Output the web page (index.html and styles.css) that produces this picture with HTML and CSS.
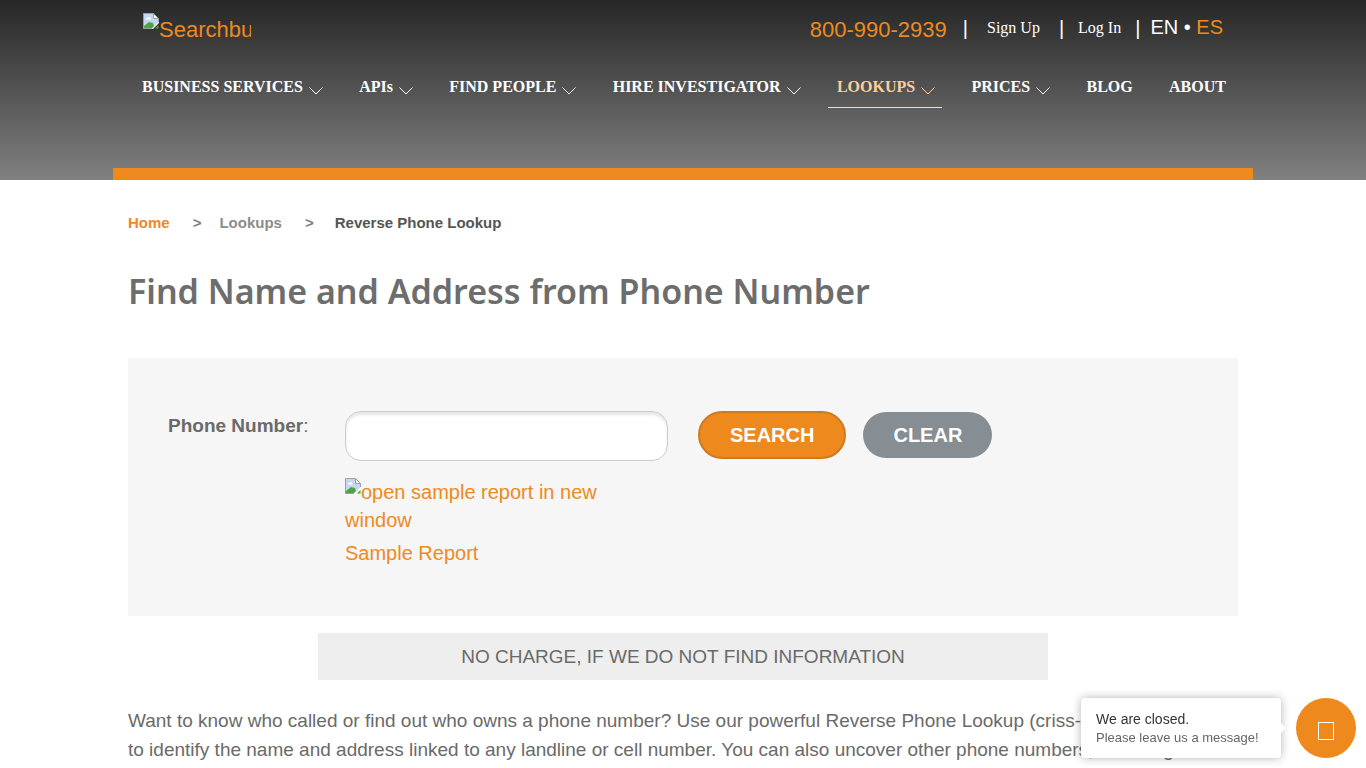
FILE: index.html
```html
<!DOCTYPE html>
<html lang="en">
<head>
<meta charset="utf-8">
<meta name="viewport" content="width=device-width, initial-scale=1">
<title>Reverse Phone Lookup</title>
<link rel="stylesheet" href="styles.css">
</head>
<body>
<svg class="defs" aria-hidden="true">
  <symbol id="chevron" viewBox="0 0 14 8"><path d="M.5.5 7 7 13.5.5" fill="none" stroke="currentColor"/></symbol>
  <symbol id="missing" viewBox="0 0 16 16">
    <path d="M.5.5h10l5 5v4l-6 6H.5z" fill="#c4d8f4" stroke="#9a9fa6"/>
    <path d="M10.500.5v5h5z" fill="#fff" stroke="#9a9fa6"/>
    <path d="M3 6.500a2 2 0 0 1 2-2 2 2 0 0 1 3 2z" fill="#fff"/>
    <path d="M1 15v-2l5-4 4 1 1 3-2 2z" fill="#4fa43f"/>
    <path d="M8.500 16 16 8.500V10l-6 6z" fill="#fff"/>
    <path d="M12 15.500h3.500V12z" fill="#4fa43f"/>
  </symbol>
</svg>
<header class="header">
  <div class="container header-inner">
    <div class="topbar">
      <a class="logo" href="#"><svg class="missing"><use href="#missing"/></svg>Searchbug</a>
      <div class="account">
        <a class="phone" href="#">800-990-2939</a>
        <span class="bar">|</span>
        <a class="sign" href="#">Sign Up</a>
        <span class="bar">|</span>
        <a class="log" href="#">Log In</a>
        <span class="bar">|</span>
        <span class="lang">EN • <a href="#">ES</a></span>
      </div>
    </div>
    <nav class="nav">
      <a href="#">BUSINESS SERVICES<svg class="chevron"><use href="#chevron"/></svg></a>
      <a href="#">APIs<svg class="chevron"><use href="#chevron"/></svg></a>
      <a href="#">FIND PEOPLE<svg class="chevron"><use href="#chevron"/></svg></a>
      <a href="#">HIRE INVESTIGATOR<svg class="chevron"><use href="#chevron"/></svg></a>
      <a class="active" href="#">LOOKUPS<svg class="chevron"><use href="#chevron"/></svg></a>
      <a href="#">PRICES<svg class="chevron"><use href="#chevron"/></svg></a>
      <a href="#">BLOG</a>
      <a href="#">ABOUT</a>
    </nav>
  </div>
</header>
<main class="container main">
  <nav class="crumbs" aria-label="Breadcrumb">
    <a class="home" href="#">Home</a><span class="sep">&gt;</span><a href="#">Lookups</a><span class="sep wide">&gt;</span><span class="current">Reverse Phone Lookup</span>
  </nav>
  <h1 class="title">Find Name and Address from Phone Number</h1>
  <form class="search">
    <label class="label" for="phone"><b>Phone Number</b>:</label>
    <div class="field">
      <input class="input" id="phone" type="tel">
      <a class="sample" href="#"><svg class="missing"><use href="#missing"/></svg>open sample report in new window</a>
      <a class="sample report" href="#">Sample Report</a>
    </div>
    <div class="buttons">
      <button class="button primary" type="button">SEARCH</button>
      <button class="button" type="reset">CLEAR</button>
    </div>
  </form>
  <p class="notice">NO CHARGE, IF WE DO NOT FIND INFORMATION</p>
  <p class="intro">Want to know who called or find out who owns a phone number? Use our powerful Reverse Phone Lookup (criss-cross directory) to&nbsp;identify the name and address linked to any landline or cell number. You can also uncover other phone numbers, including</p>
</main>
<aside class="chat">
  <div class="bubble">
    <div class="closed">We are closed.</div>
    <div class="leave">Please leave us a message!</div>
  </div>
  <button class="chat-button" type="button" aria-label="Leave a message"><span class="glyph"></span></button>
</aside>
</body>
</html>
```
FILE: styles.css
```css
* { box-sizing: border-box; }
body { margin: 0; background: #fff; color: #6a6a6a; font: 19px/29px "Liberation Sans", Arial, sans-serif; }
a { color: #ee8a1d; text-decoration: none; }
.defs { position: absolute; width: 0; height: 0; }
.container { max-width: 1140px; margin: 0 auto; }
.header { background: linear-gradient(#262626, #808080); }
.header-inner { height: 180px; border-bottom: 12px solid #ee8a1d; padding: 12px 20px 0; }
.topbar { display: flex; justify-content: space-between; padding: 0 10px; height: 60px; }
.logo { width: 108px; overflow: hidden; font-size: 22px; line-height: 36px; white-space: nowrap; }
.missing { width: 16px; height: 16px; vertical-align: 8px; }
.sample .missing { vertical-align: 5px; }
.account { display: flex; align-items: flex-start; color: #fff; line-height: 30px; }
.phone { font-size: 22px; line-height: 36px; margin-right: 16px; }
.bar { font-size: 20px; line-height: 32px; }
.sign, .log { color: #fff; font: 16px/32px "Liberation Serif", "Times New Roman", serif; }
.sign { margin: 0 19px; }
.log { margin: 0 14px; }
.lang { font-size: 20px; margin-left: 10px; }
.nav { display: flex; justify-content: space-between; }
.nav a { display: flex; gap: 6px; padding: 0 7px 0 9px; height: 36px; color: #fff; font: bold 16px/30px "Liberation Serif", "Times New Roman", serif; white-space: nowrap; }
.nav .active { color: #fbcf9f; border-bottom: 1px solid #fbdcb8; }
.chevron { width: 14px; height: 8px; margin-top: 15px; }
.main { padding: 0 15px; }
.crumbs { display: flex; padding-top: 28px; font-size: 15px; line-height: 30px; font-weight: bold; color: #808080; }
.crumbs a { color: #8c8c8c; }
.crumbs .home { color: #ee8a1d; }
.sep { margin: 0 18px 0 23px; }
.wide { margin-right: 21px; }
.current { color: #555; }
.title { margin: 28px 0 42px; font: 600 34px/50px "Noto Sans", "Open Sans", sans-serif; color: #6d6d6d; }
.search { display: flex; align-items: flex-start; min-height: 258px; padding: 53px 40px 40px; background: #f6f6f6; }
.label { flex: 0 0 177px; }
.field { flex: 0 0 323px; display: flex; flex-direction: column; }
.input { width: 100%; height: 50px; padding: 0 16px; border: 1px solid #ccc; border-radius: 16px; background: #fff; box-shadow: inset 0 3px 3px #e6e6e6; font: inherit; }
.sample { margin-top: 17px; padding-right: 60px; font-size: 20px; line-height: 28px; }
.report { margin-top: 5px; }
.buttons { display: flex; align-items: center; gap: 17px; margin-left: 30px; }
.button { height: 46px; padding: 0 30px; border: 0; border-radius: 24px; background: #868e94; color: #fff; font: bold 20px/24px "Liberation Sans", Arial, sans-serif; }
.primary { height: 48px; border: 2px solid #cf7a20; background: #ee8a1d; }
.notice { max-width: 730px; margin: 17px auto 26px; padding: 9px; background: #eee; text-align: center; }
.intro { margin: 0; }
.chat { position: fixed; right: 10px; bottom: 10px; display: flex; gap: 15px; }
.bubble { position: relative; width: 200px; height: 60px; padding: 12px 15px; border-radius: 4px; background: #fff; box-shadow: 0 0 10px rgba(0, 0, 0, .3); white-space: nowrap; }
.bubble::after { content: ""; position: absolute; left: 100%; top: 25px; border: 5px solid transparent; border-left-color: #fff; border-right: 0; }
.closed { color: #333; font-size: 14px; line-height: 18px; }
.leave { color: #666; font-size: 13px; line-height: 20px; }
.chat-button { display: flex; align-items: center; justify-content: center; width: 60px; height: 60px; padding: 6px 0 0; border: 0; border-radius: 50%; background: #ee8a1d; }
.glyph { width: 16px; height: 18px; border: 1px solid #fff; }
```
